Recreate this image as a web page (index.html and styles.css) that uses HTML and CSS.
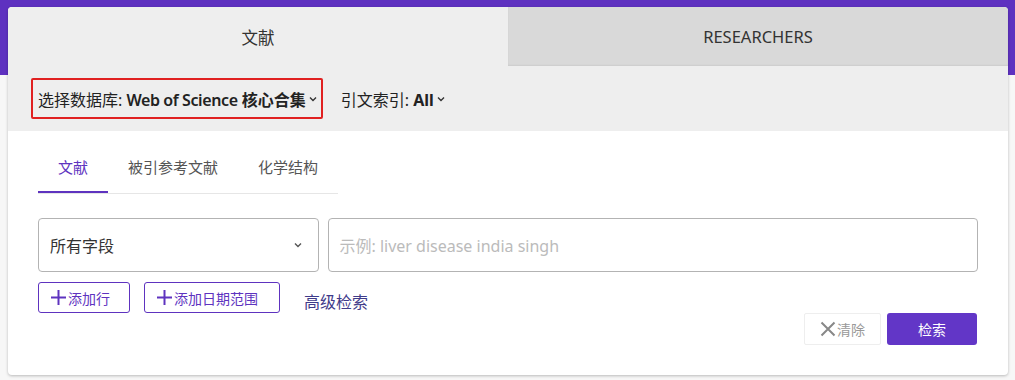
FILE: index.html
```html
<!DOCTYPE html>
<html lang="zh-CN">
<head>
    <meta charset="UTF-8">
    <title>Web of Science 检索</title>
    <link rel="stylesheet" href="styles.css">
</head>
<body>
    <div class="band"></div>
    <div class="page">
        <div class="card">
            <!-- Top tabs -->
            <div class="top-tabs">
                <div class="top-tab active">文献</div>
                <div class="top-tab">RESEARCHERS</div>
            </div>

            <!-- Database selector row -->
            <div class="db-row">
                <div class="db-select boxed">
                    <span>选择数据库: <span class="db-name">Web of Science</span> <b>核心合集</b></span>
                    <svg class="chev" width="8" height="6" viewBox="0 0 8 6"><path d="M1 1.5 L4 4.5 L7 1.5" fill="none" stroke="#333" stroke-width="1.4"/></svg>
                </div>
                <div class="db-select">
                    <span>引文索引: <b>All</b></span>
                    <svg class="chev" width="8" height="6" viewBox="0 0 8 6"><path d="M1 1.5 L4 4.5 L7 1.5" fill="none" stroke="#333" stroke-width="1.4"/></svg>
                </div>
            </div>

            <div class="body">
                <div class="sub-tabs">
                    <div class="sub-tab active">文献</div>
                    <div class="sub-tab">被引参考文献</div>
                    <div class="sub-tab">化学结构</div>
                </div>

                <div class="query-row">
                    <div class="field-select">
                        <span>所有字段</span>
                        <svg width="10" height="6" viewBox="0 0 10 6"><path d="M2 1.5 L5 4.5 L8 1.5" fill="none" stroke="#555" stroke-width="1.4"/></svg>
                    </div>
                    <div class="query-input">示例: liver disease india singh</div>
                </div>

                <div class="actions">
                    <button class="add-btn row-btn">
                        <svg class="plus" width="15" height="15" viewBox="0 0 15 15"><path d="M7.5 0 V15 M0 7.5 H15" stroke="#5e33bf" stroke-width="2"/></svg>添加行
                    </button>
                    <button class="add-btn date-btn">
                        <svg class="plus" width="15" height="15" viewBox="0 0 15 15"><path d="M7.5 0 V15 M0 7.5 H15" stroke="#5e33bf" stroke-width="2"/></svg>添加日期范围
                    </button>
                    <a class="adv-link">高级检索</a>
                </div>

                <div class="submit-row">
                    <button class="clear-btn">
                        <svg width="16" height="16" viewBox="0 0 16 16"><path d="M1.5 1.5 L14.5 14.5 M14.5 1.5 L1.5 14.5" stroke="#888" stroke-width="2"/></svg>清除
                    </button>
                    <button class="search-btn">检索</button>
                </div>
            </div>
        </div>
    </div>
</body>
</html>
```

FILE: styles.css
```css
/* Base */
* {
    box-sizing: border-box;
    margin: 0;
    padding: 0;
}

body {
    font-family: "Noto Sans", "Noto Sans CJK SC", sans-serif;
    background: #f7f7f7;
    color: #333;
    width: 1015px;
    height: 380px;
    overflow: hidden;
    position: relative;
}

/* purple header band behind the card */
.band {
    height: 75px;
    background: #5e31c0;
}

.page {
    position: absolute;
    top: 7px;
    left: 8px;
}

/* Card */
.card {
    width: 1000px;
    height: 368px;
    background: #fff;
    border-radius: 4px;
    box-shadow: 0 1px 3px rgba(0, 0, 0, 0.25);
    overflow: hidden;
}

/* Top tabs */
.top-tabs {
    display: flex;
    height: 59px;
}

.top-tab {
    flex: 1;
    display: flex;
    align-items: center;
    justify-content: center;
    font-size: 16.5px;
    color: #333;
    background: #d9d9d9;
    box-shadow: inset 0 -1px 2px rgba(0, 0, 0, 0.06);
}

.top-tab.active {
    background: #eeeeee;
    box-shadow: none;
}

/* Database selector row */
.db-row {
    height: 65px;
    background: #eeeeee;
    display: flex;
    align-items: center;
    padding-left: 23px;
    gap: 18px;
}

.db-select {
    height: 41px;
    display: flex;
    align-items: center;
    gap: 3px;
    font-size: 16px;
    color: #222;
    white-space: nowrap;
}

.db-select.boxed {
    padding: 0 4px 0 5px;
    border: 2px solid #e02020;
    border-radius: 2px;
}

.db-name {
    font-weight: 600;
    letter-spacing: -0.4px;
}

.db-select b {
    font-weight: 700;
}

/* Body */
.body {
    padding: 0 30px;
}

.sub-tabs {
    display: flex;
    width: 300px;
    border-bottom: 1px solid #e6e6e6;
}

.sub-tab {
    font-size: 15px;
    color: #555;
    height: 62px;
    padding: 25px 20px 0;
}

.sub-tab.active {
    color: #5e33bf;
    border-bottom: 2px solid #5e33bf;
    margin-bottom: -1px;
}

.query-row {
    display: flex;
    gap: 9px;
    margin-top: 24px;
}

.field-select {
    width: 282px;
    height: 54px;
    border: 1px solid #b3b3b3;
    border-radius: 4px;
    display: flex;
    align-items: center;
    justify-content: space-between;
    padding: 0 15px 0 11px;
    font-size: 16px;
    color: #333;
}

.query-input {
    width: 651px;
    height: 54px;
    border: 1px solid #b3b3b3;
    border-radius: 4px;
    display: flex;
    align-items: center;
    padding-left: 10px;
    font-size: 16px;
    color: #bbbbbb;
}

/* Add buttons */
.actions {
    display: flex;
    align-items: flex-start;
    gap: 14px;
    margin-top: 10px;
}

.add-btn {
    height: 31px;
    border: 1px solid #5e33bf;
    border-radius: 3px;
    background: #fff;
    color: #5e33bf;
    font-family: inherit;
    font-size: 14px;
    padding-left: 12px;
    display: flex;
    align-items: center;
    gap: 2px;
}

.row-btn {
    width: 92px;
}

.date-btn {
    width: 136px;
}

.adv-link {
    font-size: 16px;
    line-height: 22px;
    color: #3f3b8a;
    margin-left: 10px;
    margin-top: 9px;
}

/* Submit row */
.submit-row {
    display: flex;
    justify-content: flex-end;
    gap: 6px;
    margin-top: 0;
}

.clear-btn {
    width: 77px;
    height: 32px;
    border: 1px solid #eeeeee;
    border-radius: 2px;
    background: #fff;
    color: #999;
    font-family: inherit;
    font-size: 14px;
    display: flex;
    align-items: center;
    justify-content: center;
    gap: 1px;
}

.search-btn {
    width: 90px;
    height: 32px;
    border: none;
    border-radius: 3px;
    background: #6236c7;
    color: #fff;
    font-family: inherit;
    font-size: 14px;
    margin-right: 1px;
}
```
